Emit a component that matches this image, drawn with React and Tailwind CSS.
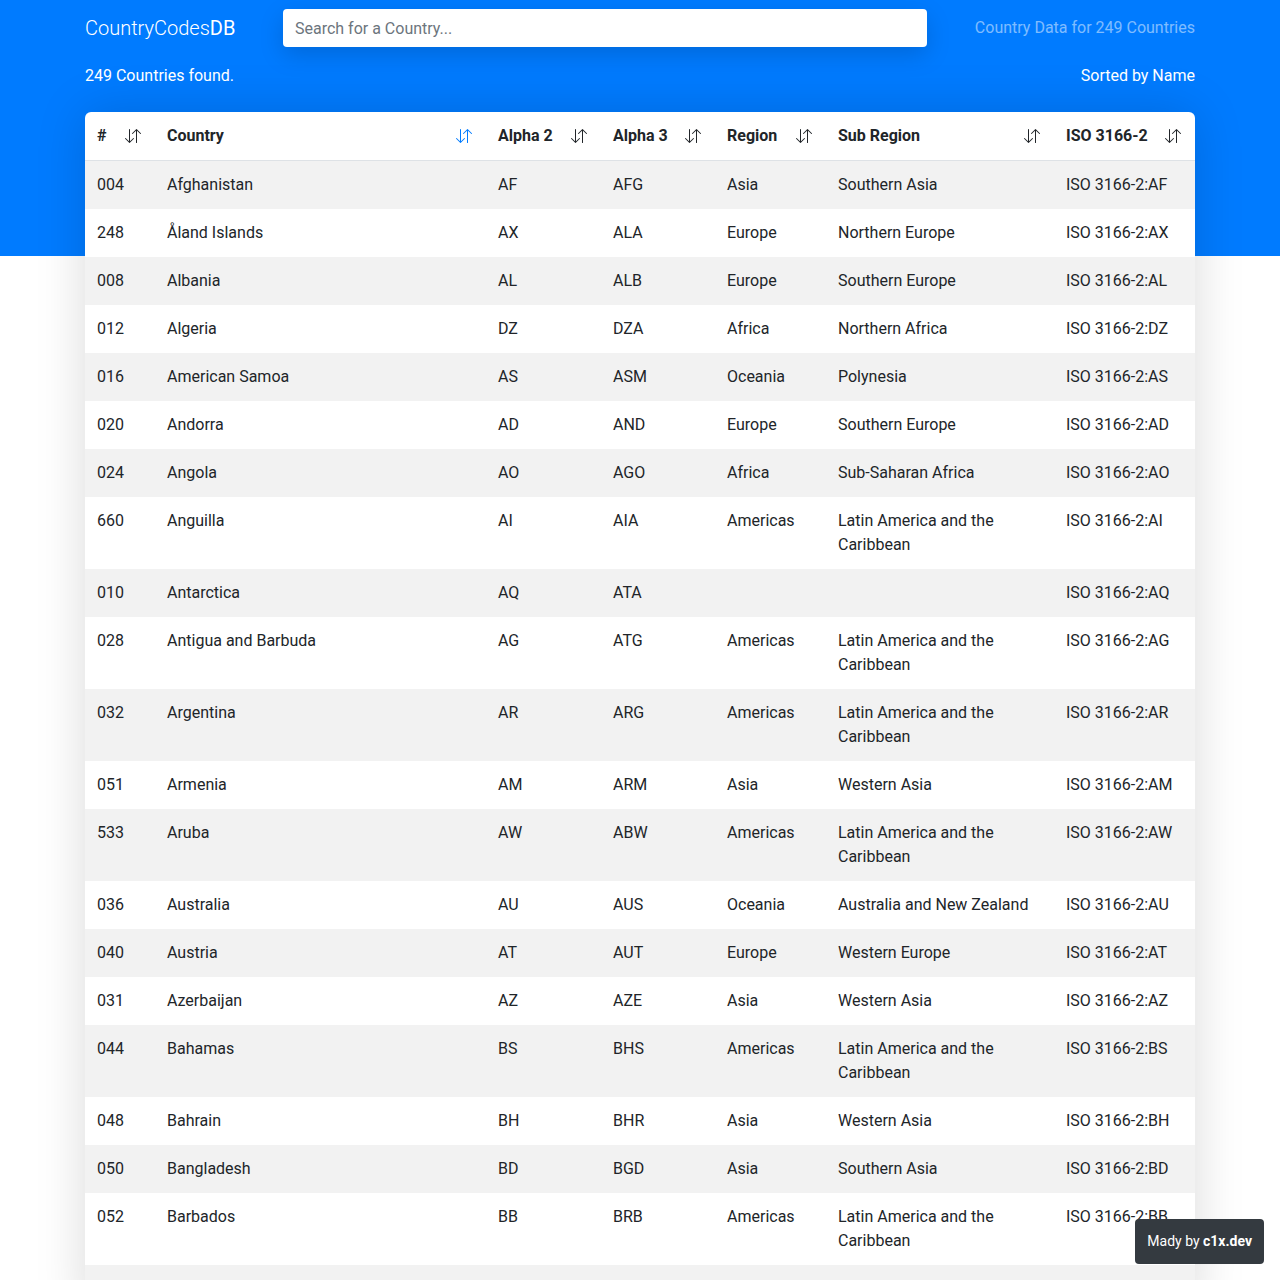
import { useState } from 'react';

const COUNTRIES = [
  ['004', 'Afghanistan', 'AF', 'AFG', 'Asia', 'Southern Asia'],
  ['248', 'Åland Islands', 'AX', 'ALA', 'Europe', 'Northern Europe'],
  ['008', 'Albania', 'AL', 'ALB', 'Europe', 'Southern Europe'],
  ['012', 'Algeria', 'DZ', 'DZA', 'Africa', 'Northern Africa'],
  ['016', 'American Samoa', 'AS', 'ASM', 'Oceania', 'Polynesia'],
  ['020', 'Andorra', 'AD', 'AND', 'Europe', 'Southern Europe'],
  ['024', 'Angola', 'AO', 'AGO', 'Africa', 'Sub-Saharan Africa'],
  ['660', 'Anguilla', 'AI', 'AIA', 'Americas', 'Latin America and the Caribbean'],
  ['010', 'Antarctica', 'AQ', 'ATA', '', ''],
  ['028', 'Antigua and Barbuda', 'AG', 'ATG', 'Americas', 'Latin America and the Caribbean'],
  ['032', 'Argentina', 'AR', 'ARG', 'Americas', 'Latin America and the Caribbean'],
  ['051', 'Armenia', 'AM', 'ARM', 'Asia', 'Western Asia'],
  ['533', 'Aruba', 'AW', 'ABW', 'Americas', 'Latin America and the Caribbean'],
  ['036', 'Australia', 'AU', 'AUS', 'Oceania', 'Australia and New Zealand'],
  ['040', 'Austria', 'AT', 'AUT', 'Europe', 'Western Europe'],
  ['031', 'Azerbaijan', 'AZ', 'AZE', 'Asia', 'Western Asia'],
  ['044', 'Bahamas', 'BS', 'BHS', 'Americas', 'Latin America and the Caribbean'],
  ['048', 'Bahrain', 'BH', 'BHR', 'Asia', 'Western Asia'],
  ['050', 'Bangladesh', 'BD', 'BGD', 'Asia', 'Southern Asia'],
  ['052', 'Barbados', 'BB', 'BRB', 'Americas', 'Latin America and the Caribbean'],
  ['112', 'Belarus', 'BY', 'BLR', 'Europe', 'Eastern Europe'],
];

const COLUMNS = [
  { key: 'num', label: '#', width: 'w-[70px]' },
  { key: 'name', label: 'Country', width: 'w-[331px]' },
  { key: 'a2', label: 'Alpha 2', width: 'w-[115px]' },
  { key: 'a3', label: 'Alpha 3', width: 'w-[114px]' },
  { key: 'region', label: 'Region', width: 'w-[111px]' },
  { key: 'sub', label: 'Sub Region', width: 'w-[228px]' },
  { key: 'iso', label: 'ISO 3166-2', width: 'w-[141px]' },
];

// bootstrap-style "arrow-down-up" sort icon
function SortIcon({ active }) {
  return (
    <svg
      viewBox="0 0 16 16"
      fill="currentColor"
      className={active ? 'w-4 h-4 mr-[2px] text-[#007bff]' : 'w-4 h-4 mr-[2px] text-[#212529]'}
    >
      <path
        fillRule="evenodd"
        d="M11.5 15a.5.5 0 0 0 .5-.5V2.707l3.146 3.147a.5.5 0 0 0 .708-.708l-4-4a.5.5 0 0 0-.708 0l-4 4a.5.5 0 1 0 .708.708L11 2.707V14.5a.5.5 0 0 0 .5.5m-7-14a.5.5 0 0 1 .5.5v11.793l3.146-3.147a.5.5 0 0 1 .708.708l-4 4a.5.5 0 0 1-.708 0l-4-4a.5.5 0 0 1 .708-.708L4 13.293V1.5a.5.5 0 0 1 .5-.5"
      />
    </svg>
  );
}

export default function App() {
  const [query, setQuery] = useState('');
  const sortKey = 'name';

  return (
    <div className="min-h-screen bg-white text-[#212529] font-['Roboto',_'Liberation_Sans',_sans-serif] text-base">
      {/* Blue header band */}
      <div className="bg-[#007bff] pb-[168px]">
        <div className="w-[1110px] mx-auto pt-[9px]">
          <div className="flex items-center h-[38px]">
            <div className="w-[198px] text-[20px] text-white font-light">
              CountryCodes<span className="font-normal">DB</span>
            </div>
            <input
              value={query}
              onChange={(e) => setQuery(e.target.value)}
              placeholder="Search for a Country..."
              className="w-[644px] h-[38px] rounded bg-white px-3 text-base text-[#495057] placeholder:text-[#6c757d] outline-none shadow-[0_8px_24px_rgba(0,0,0,0.15)]"
            />
            <div className="ml-auto text-white/50">Country Data for 249 Countries</div>
          </div>
          <div className="flex items-center justify-between mt-[17px] h-6 text-white">
            <span>249 Countries found.</span>
            <span>Sorted by Name</span>
          </div>
        </div>
      </div>

      {/* Table card */}
      <div className="w-[1110px] mx-auto -mt-[144px] bg-white rounded-t-md shadow-[0_0_50px_rgba(0,0,0,0.15)]">
        <table className="w-full table-fixed border-collapse">
          <colgroup>
            {COLUMNS.map((c) => (
              <col key={c.key} className={c.width} />
            ))}
          </colgroup>
          <thead>
            <tr className="border-b border-[#dee2e6]">
              {COLUMNS.map((c) => (
                <th key={c.key} className="h-12 px-3 text-left font-bold">
                  <div className="flex items-center justify-between">
                    <span>{c.label}</span>
                    <SortIcon active={c.key === sortKey} />
                  </div>
                </th>
              ))}
            </tr>
          </thead>
          <tbody>
            {COUNTRIES.map(([num, name, a2, a3, region, sub], i) => (
              <tr key={a3} className={i % 2 === 0 ? 'bg-[#f2f2f2]' : 'bg-white'}>
                <td className="px-3 py-3 align-top leading-6">{num}</td>
                <td className="px-3 py-3 align-top leading-6">{name}</td>
                <td className="px-3 py-3 align-top leading-6">{a2}</td>
                <td className="px-3 py-3 align-top leading-6">{a3}</td>
                <td className="px-3 py-3 align-top leading-6">{region}</td>
                <td className="px-3 py-3 align-top leading-6">{sub}</td>
                <td className="px-3 py-3 align-top leading-6">ISO 3166-2:{a2}</td>
              </tr>
            ))}
          </tbody>
        </table>
      </div>

      {/* Credit badge */}
      <div className="fixed right-4 bottom-4 bg-[#343a40] text-white text-sm rounded px-3 py-3 leading-[21px]">
        Mady by <b className="font-bold">c1x.dev</b>
      </div>
    </div>
  );
}
